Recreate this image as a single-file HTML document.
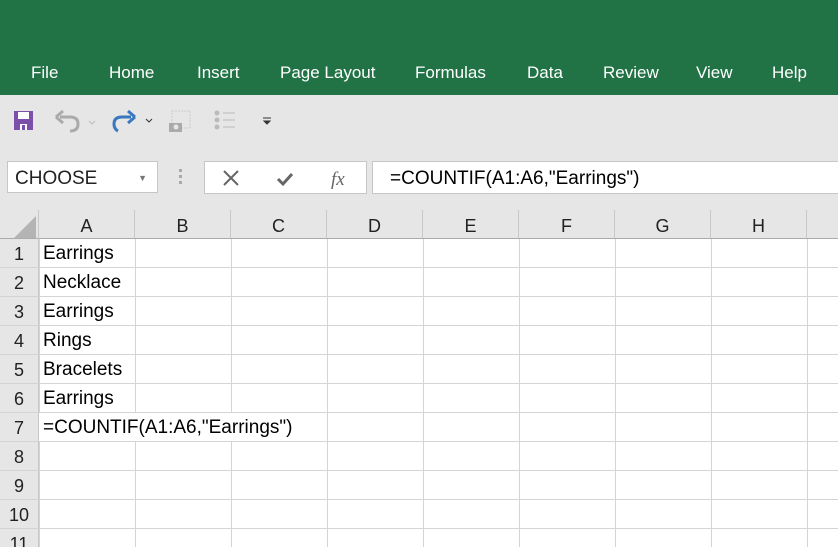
<!DOCTYPE html><html><head><style>
html,body{margin:0;width:838px;height:547px;overflow:hidden}
body{background:#e6e6e6;font-family:"Liberation Sans",sans-serif;position:relative}
.g{position:absolute;left:0;top:0;width:838px;height:95px;background:#217346}
.t{position:absolute;top:63px;color:#fff;font-size:17px}
.abs{position:absolute}
.ch{position:absolute;top:210px;height:28px;border-right:1px solid #c8c8c8;text-align:center;line-height:32px;font-size:18px;color:#222;width:95px}
.rh{position:absolute;left:0;width:38px;border-right:1px solid #c8c8c8;border-bottom:1px solid #d4d4d4;text-align:center;font-size:18px;color:#222;height:28px;line-height:30px;background:#e6e6e6}
.cell{position:absolute;left:43px;font-size:19px;color:#000;line-height:30px;white-space:nowrap}
</style></head><body>
<div class="g"></div>
<div class="t" style="left:31px">File</div><div class="t" style="left:109px">Home</div><div class="t" style="left:197px">Insert</div><div class="t" style="left:280px">Page Layout</div><div class="t" style="left:415px">Formulas</div><div class="t" style="left:527px">Data</div><div class="t" style="left:603px">Review</div><div class="t" style="left:696px">View</div><div class="t" style="left:772px">Help</div>
<svg class="abs" style="left:0;top:95px" width="300" height="50">
<rect x="14" y="16" width="19" height="19" fill="#7e4fa8"/><rect x="18" y="17" width="11" height="7" fill="#fff"/><rect x="20" y="29" width="7" height="6" fill="#fff"/><rect x="22" y="30" width="3" height="5" fill="#7e4fa8"/>
<path d="M60 22 L70 22 Q78 22 78 29 Q78 36 70 36" stroke="#aaa" stroke-width="3" fill="none"/><path d="M56 22 L63 16 M56 22 L63 28" stroke="#aaa" stroke-width="3" fill="none"/>
<path d="M89 26 L92 29 L95 26" stroke="#bbb" fill="none"/>
<path d="M131 22 L122 22 Q114 22 114 29 Q114 34 118 36" stroke="#3a77c1" stroke-width="3" fill="none"/><path d="M135 22 L128 16 M135 22 L128 28" stroke="#3a77c1" stroke-width="3" fill="none"/>
<path d="M146 24 L149 27 L152 24" stroke="#333" fill="none"/>
<rect x="172" y="16" width="18" height="17" fill="none" stroke="#ccc" stroke-dasharray="2,1"/><rect x="169" y="28" width="13" height="9" fill="#aaa"/><circle cx="176" cy="32" r="2.5" fill="#e6e6e6"/>
<circle cx="217" cy="18" r="2.5" fill="#bbb"/><circle cx="217" cy="25" r="2.5" fill="#bbb"/><circle cx="217" cy="32" r="2.5" fill="#bbb"/><path d="M223 18h12M223 25h12M223 32h12" stroke="#bbb"/>
<path d="M263 23h8M264 26h6l-3 3z" stroke="#333" fill="#333"/>
</svg>
<div class="abs" style="left:7px;top:161px;height:32px;background:#fff;border:1px solid #c6c6c6;font-size:19px;line-height:34px;padding-left:7px;box-sizing:border-box;width:151px;color:#222">CHOOSE<span style="position:absolute;right:10px;top:-1px;font-size:9px;color:#777">▼</span></div>
<div class="abs" style="left:179px;top:169px;width:3px;height:18px;background:repeating-linear-gradient(#aaa 0 3px,transparent 3px 6px)"></div>
<div class="abs" style="left:204px;top:161px;width:163px;height:33px;background:#fff;border:1px solid #c6c6c6;box-sizing:border-box"></div>
<svg class="abs" style="left:204px;top:161px" width="163" height="33"><path d="M20 10l14 14M34 10l-14 14" stroke="#666" stroke-width="2"/><path d="M74 18l5 5 9-10" stroke="#666" stroke-width="3" fill="none"/><text x="127" y="24" font-family="Liberation Serif" font-style="italic" font-size="19" fill="#666">fx</text></svg>
<div class="abs" style="left:372px;top:161px;width:470px;height:33px;background:#fff;border:1px solid #c6c6c6;box-sizing:border-box;font-size:19px;line-height:34px;padding-left:17px;color:#000">=COUNTIF(A1:A6,"Earrings")</div>
<div class="abs" style="left:0;top:238px;width:838px;height:309px;background:#fff;background-image:linear-gradient(#d4d4d4 1px,transparent 1px),linear-gradient(90deg,#d4d4d4 1px,transparent 1px);background-size:96px 29px,96px 29px;background-position:0 0,39px 0"></div>
<div class="abs" style="left:0;top:210px;width:838px;height:28px;border-bottom:1px solid #ababab;background:#e6e6e6"></div>
<svg class="abs" style="left:14px;top:216px" width="24" height="22"><path d="M22 0V22H0z" fill="#b4b4b4"/></svg>
<div class="abs" style="left:38px;top:210px;width:1px;height:29px;background:#c8c8c8"></div>
<div class="ch" style="left:39px">A</div><div class="ch" style="left:135px">B</div><div class="ch" style="left:231px">C</div><div class="ch" style="left:327px">D</div><div class="ch" style="left:423px">E</div><div class="ch" style="left:519px">F</div><div class="ch" style="left:615px">G</div><div class="ch" style="left:711px">H</div><div class="ch" style="left:807px;border:0"></div>
<div class="rh" style="top:239px">1</div><div class="rh" style="top:268px">2</div><div class="rh" style="top:297px">3</div><div class="rh" style="top:326px">4</div><div class="rh" style="top:355px">5</div><div class="rh" style="top:384px">6</div><div class="rh" style="top:413px">7</div><div class="rh" style="top:442px">8</div><div class="rh" style="top:471px">9</div><div class="rh" style="top:500px">10</div><div class="rh" style="top:529px">11</div>
<div class="abs" style="left:39px;top:413px;width:288px;height:28px;background:#fff"></div>
<div class="cell" style="top:239px">Earrings</div><div class="cell" style="top:268px">Necklace</div><div class="cell" style="top:297px">Earrings</div><div class="cell" style="top:326px">Rings</div><div class="cell" style="top:355px">Bracelets</div><div class="cell" style="top:384px">Earrings</div><div class="cell" style="top:413px">=COUNTIF(A1:A6,"Earrings")</div>
</body></html>
